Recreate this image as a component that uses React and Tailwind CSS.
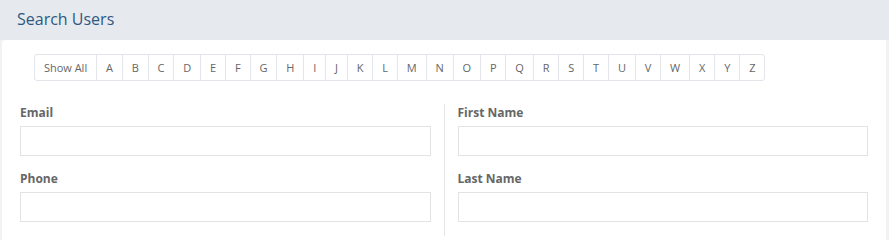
const letters = "ABCDEFGHIJKLMNOPQRSTUVWXYZ".split("");

function Field({ label, last }) {
  return (
    <div className={last ? "" : "mb-[14px]"}>
      <label className="block text-[12px] leading-[17px] font-bold text-[#666]">{label}</label>
      <input
        type="text"
        className="mt-[5px] block h-[30px] w-full border border-[#e3e3e3] bg-white outline-none"
      />
    </div>
  );
}

export default function App() {
  return (
    <div className="flex h-[240px] w-[889px] flex-col overflow-hidden bg-[#f1f2f4] font-['Open_Sans',sans-serif]">
      {/* Panel header */}
      <div className="flex h-10 shrink-0 items-center bg-[#e6e9ed] px-[17px] pb-[3px]">
        <h2 className="text-[16px] text-[#2f5882]">Search Users</h2>
      </div>

      {/* Panel body */}
      <div className="ml-[2px] mr-[3px] flex-1 rounded-tl-[3px] bg-white px-[18px] pt-[14px]">
        {/* Alphabet filter */}
        <div className="ml-[14px] inline-flex h-[27px] rounded-[3px] border border-[#e2e5e9] text-[11px] text-[#666]">
          <button className="px-[8.9px] leading-[25px] text-[#666]">Show All</button>
          {letters.map((l) => (
            <button key={l} className="border-l border-[#e2e5e9] px-[8.9px] leading-[25px] text-[#666]">
              {l}
            </button>
          ))}
        </div>

        {/* Search fields */}
        <div className="mt-[23px] flex">
          <div className="flex-1 pr-[13px] pb-[14px]">
            <Field label="Email" />
            <Field label="Phone" last />
          </div>
          <div className="flex-1 border-l border-[#e5e5e5] pl-[13px] pb-[14px]">
            <Field label="First Name" />
            <Field label="Last Name" last />
          </div>
        </div>
      </div>
    </div>
  );
}
